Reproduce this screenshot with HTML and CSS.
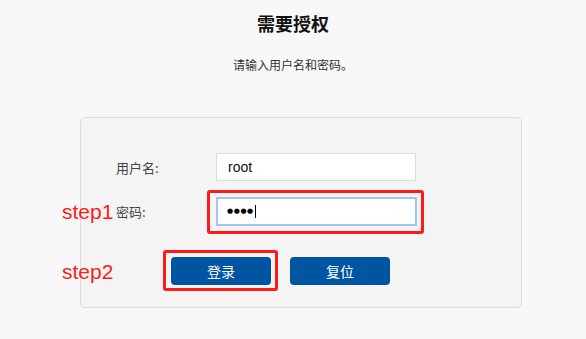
FILE: index.html
```html
<!DOCTYPE html>
<html lang="zh-CN">
<head>
    <meta charset="UTF-8">
    <meta name="viewport" content="width=device-width, initial-scale=1.0">
    <link rel="stylesheet" href="styles.css">
</head>
<body>
    <div class="page">
        <h2 class="title">需要授权</h2>
        <p class="desc">请输入用户名和密码。</p>

        <div class="login-box">
            <!-- annotations drawn over the form -->
            <span class="step step1">step1</span>
            <span class="step step2">step2</span>

            <div class="row">
                <label class="label">用户名:</label>
                <input class="field" type="text" value="root">
            </div>
            <div class="row">
                <label class="label">密码:</label>
                <div class="mark mark-input">
                    <div class="field field-focus"><span class="dots">●●●●</span><span class="caret"></span></div>
                </div>
            </div>
            <div class="buttons">
                <div class="mark mark-btn">
                    <button class="btn">登录</button>
                </div>
                <button class="btn">复位</button>
            </div>
        </div>
    </div>
</body>
</html>
```

FILE: styles.css
```css
* {
    box-sizing: border-box;
    margin: 0;
    padding: 0;
}

body {
    background-color: #f8f8f8;
    font-family: "Noto Sans CJK SC", "Liberation Sans", sans-serif;
    color: #333;
}

.page {
    padding-top: 10px;
}

.title {
    text-align: center;
    font-size: 18px;
    font-weight: bold;
    color: #111;
    line-height: 26px;
}

.desc {
    text-align: center;
    font-size: 12px;
    line-height: 18px;
    margin-top: 20px;
    color: #333;
}

.login-box {
    position: relative;
    width: 442px;
    height: 191px;
    margin: 43px 0 0 80px;
    padding: 35px 0 0 35px;
    background-color: #f4f4f4;
    border: 1px solid #dcdcdc;
    border-radius: 5px;
}

.row {
    display: flex;
    align-items: center;
    height: 28px;
    margin-bottom: 16px;
}

.label {
    width: 100px;
    font-size: 13px;
    color: #444;
}

.field {
    width: 200px;
    height: 28px;
    border: 1px solid #dcdcdc;
    background-color: #fff;
    padding-left: 11px;
    font-family: "Liberation Sans", sans-serif;
    font-size: 14px;
    color: #111;
    outline: none;
}

.field-focus {
    display: flex;
    align-items: center;
    width: 201px;
    height: 29px;
    border: 2px solid #a4c2f4;
    padding-left: 9px;
}

.dots {
    font-family: "DejaVu Sans", sans-serif;
    font-size: 7px;
    letter-spacing: 0.6px;
    color: #000;
}

.caret {
    width: 1px;
    height: 13px;
    margin-left: 1px;
    background-color: #000;
}

.mark {
    position: relative;
}

.mark::after {
    content: "";
    position: absolute;
    border: 3px solid #ff1a1a;
    border-radius: 3px;
}

.mark-input::after {
    left: -9px;
    top: -7px;
    right: -7px;
    bottom: -8px;
}

.mark-btn::after {
    left: -8px;
    top: -7px;
    right: -7px;
    bottom: -6px;
}

.buttons {
    display: flex;
    gap: 19px;
    margin-top: 32px;
    padding-left: 55px;
}

.btn {
    display: block;
    width: 100px;
    height: 28px;
    border: none;
    border-radius: 4px;
    background-color: #0055a2;
    color: #fff;
    font-family: "Noto Sans CJK SC", sans-serif;
    font-size: 14px;
}

.step {
    position: absolute;
    left: -19px;
    font-family: "Liberation Sans", sans-serif;
    font-size: 21px;
    color: #ff1a1a;
}

.step1 {
    top: 82px;
}

.step2 {
    top: 142px;
}
```
